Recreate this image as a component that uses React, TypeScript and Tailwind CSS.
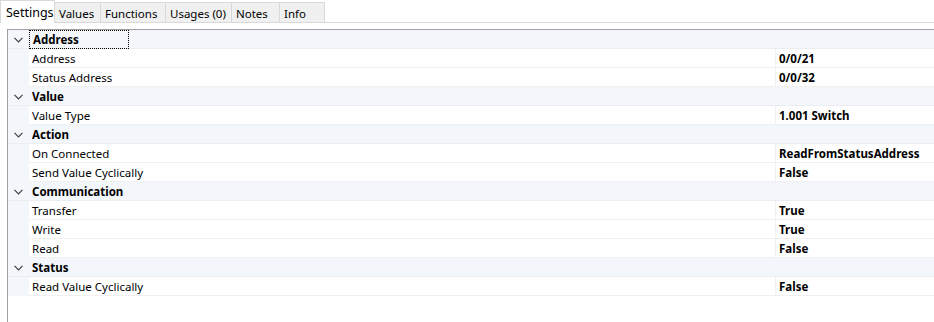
const tabs = [
  { label: "Settings", w: "w-[55px]" },
  { label: "Values", w: "w-[46px]" },
  { label: "Functions", w: "w-[65px]" },
  { label: "Usages (0)", w: "w-[66px]" },
  { label: "Notes", w: "w-[48px]" },
  { label: "Info", w: "w-[45px]" },
];

type Prop = { name: string; value: string };
type Cat = { title: string; props: Prop[] };

const cats: Cat[] = [
  {
    title: "Address",
    props: [
      { name: "Address", value: "0/0/21" },
      { name: "Status Address", value: "0/0/32" },
    ],
  },
  { title: "Value", props: [{ name: "Value Type", value: "1.001 Switch" }] },
  {
    title: "Action",
    props: [
      { name: "On Connected", value: "ReadFromStatusAddress" },
      { name: "Send Value Cyclically", value: "False" },
    ],
  },
  {
    title: "Communication",
    props: [
      { name: "Transfer", value: "True" },
      { name: "Write", value: "True" },
      { name: "Read", value: "False" },
    ],
  },
  { title: "Status", props: [{ name: "Read Value Cyclically", value: "False" }] },
];

const Chevron = () => (
  <svg width="9" height="6" viewBox="0 0 9 6" className="text-[#404040]">
    <path d="M0.5 0.8 L4.5 4.8 L8.5 0.8" fill="none" stroke="currentColor" strokeWidth="1.2" />
  </svg>
);

export default function App() {
  return (
    <div
      className="w-[934px] h-[322px] bg-white text-black text-[11.5px] flex flex-col overflow-hidden"
      style={{ fontFamily: '"Noto Sans", sans-serif' }}
    >
      <div className="flex items-end h-[23px] border-b border-[#d9d9d9]">
        {tabs.map((t, i) =>
          i === 0 ? (
            <div
              key={t.label}
              className={`${t.w} h-[23px] pl-[5px] pt-[2px] flex items-center bg-white border-x border-t border-[#d9d9d9] -mb-px text-[12.5px]`}
            >
              {t.label}
            </div>
          ) : (
            <div
              key={t.label}
              className={`${t.w} h-[20px] pl-[4px] pt-[3px] flex items-center bg-[#f0f0f0] border-r border-t border-[#d9d9d9]`}
            >
              {t.label}
            </div>
          )
        )}
      </div>
      <div className="h-[6px]" />
      <div className="flex-1 ml-[7px] border-l border-t border-[#a0a0a0] flex flex-col">
        {cats.map((c, ci) => (
          <div key={c.title} className="flex flex-col">
            <div className="h-[19px] flex items-center bg-[#f3f6fb] border-b border-[#eaedf2]">
              <div className="w-[21px] pt-[2px] flex justify-center items-center">
                <Chevron />
              </div>
              <div
                className={
                  "h-[19px] flex items-center pl-[3px] pr-[3px] pt-[2px] font-bold " +
                  (ci === 0 ? "w-[100px] border border-dotted border-black" : "")
                }
              >
                {c.title}
              </div>
            </div>
            {c.props.map((p) => (
              <div key={p.name} className="h-[19px] flex bg-[#f3f6fb]">
                <div className="w-[21px]" />
                <div className="flex-1 flex bg-white border-b border-[#f0f0f0]">
                  <div className="w-[747px] pl-[3px] pt-[2px] flex items-center border-r border-[#f0f0f0]">
                    {p.name}
                  </div>
                  <div className="flex-1 pl-[3px] pt-[2px] flex items-center font-bold">
                    {p.value}
                  </div>
                </div>
              </div>
            ))}
          </div>
        ))}
      </div>
    </div>
  );
}
